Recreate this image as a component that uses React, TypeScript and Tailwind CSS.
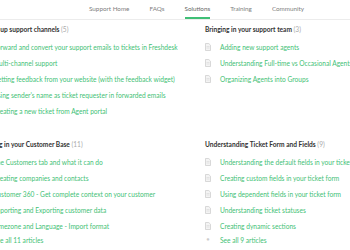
const navItems = ["Support Home", "FAQs", "Solutions", "Training", "Community"];

type Section = { title: string; count: number; articles: string[]; more?: string };

const rows: Section[][] = [
  [
    {
      title: "Setting up support channels",
      count: 5,
      articles: [
        "Forward and convert your support emails to tickets in Freshdesk",
        "Multi-channel support",
        "Getting feedback from your website (with the feedback widget)",
        "Using sender's name as ticket requester in forwarded emails",
        "Creating a new ticket from Agent portal",
      ],
    },
    {
      title: "Bringing in your support team",
      count: 3,
      articles: [
        "Adding new support agents",
        "Understanding Full-time vs Occasional Agents",
        "Organizing Agents into Groups",
      ],
    },
  ],
  [
    {
      title: "Bringing in your Customer Base",
      count: 11,
      articles: [
        "The Customers tab and what it can do",
        "Creating companies and contacts",
        "Customer 360 - Get complete context on your customer",
        "Importing and Exporting customer data",
        "Timezone and Language - Import format",
      ],
      more: "See all 11 articles",
    },
    {
      title: "Understanding Ticket Form and Fields",
      count: 9,
      articles: [
        "Understanding the default fields in your ticket form",
        "Creating custom fields in your ticket form",
        "Using dependent fields in your ticket form",
        "Understanding ticket statuses",
        "Creating dynamic sections",
      ],
      more: "See all 9 articles",
    },
  ],
];

function DocIcon() {
  return (
    <svg width="6" height="8" viewBox="0 0 6 8" className="shrink-0">
      <path d="M0.5 0.5h3.3l1.7 1.7v5.3h-5z" fill="#f4f4f4" stroke="#cfcfcf" strokeWidth="0.8" />
      <path d="M1.5 3.5h3M1.5 5h3" stroke="#d6d6d6" strokeWidth="0.6" />
    </svg>
  );
}

function Category({ section }: { section: Section }) {
  return (
    <div className="flex flex-col">
      <h3 className="h-4 leading-4 font-bold text-[#333] whitespace-nowrap">
        {section.title} <span className="font-normal text-[#aaa]">({section.count})</span>
      </h3>
      <ul className="mt-[2px] flex flex-col">
        {section.articles.map((a) => (
          <li key={a} className="flex items-center h-4 gap-[9px] whitespace-nowrap">
            <DocIcon />
            <a className="text-[#3fbf76] leading-4">{a}</a>
          </li>
        ))}
        {section.more && (
          <li className="flex items-center h-3 gap-[9px] whitespace-nowrap">
            <span className="w-[6px] flex justify-center text-[#ccc] text-[5px]">●</span>
            <a className="text-[#3fbf76] leading-3">{section.more}</a>
          </li>
        )}
      </ul>
    </div>
  );
}

export default function App() {
  return (
    <div className="w-[350px] h-[250px] overflow-hidden bg-white font-['Lato',sans-serif] text-[6.6px]">
      {/* top nav */}
      <nav className="h-5 border-b border-[#ececec] flex items-stretch pl-[89px] gap-5 text-[6.3px] text-[#808080]">
        {navItems.map((n) => (
          <div
            key={n}
            className={`flex items-center whitespace-nowrap border-b-2 ${
              n === "Solutions" ? "border-[#3fbf76] text-[#666]" : "border-transparent"
            }`}
          >
            {n}
          </div>
        ))}
      </nav>

      <div className="ml-[-24px] flex flex-col gap-[17px] pt-[1px]">
        {rows.map((row, i) => (
          <div key={i} className="grid grid-cols-[227px_227px]">
            {row.map((s) => (
              <div key={s.title} className="pl-[2px]">
                <Category section={s} />
              </div>
            ))}
          </div>
        ))}
      </div>
    </div>
  );
}
